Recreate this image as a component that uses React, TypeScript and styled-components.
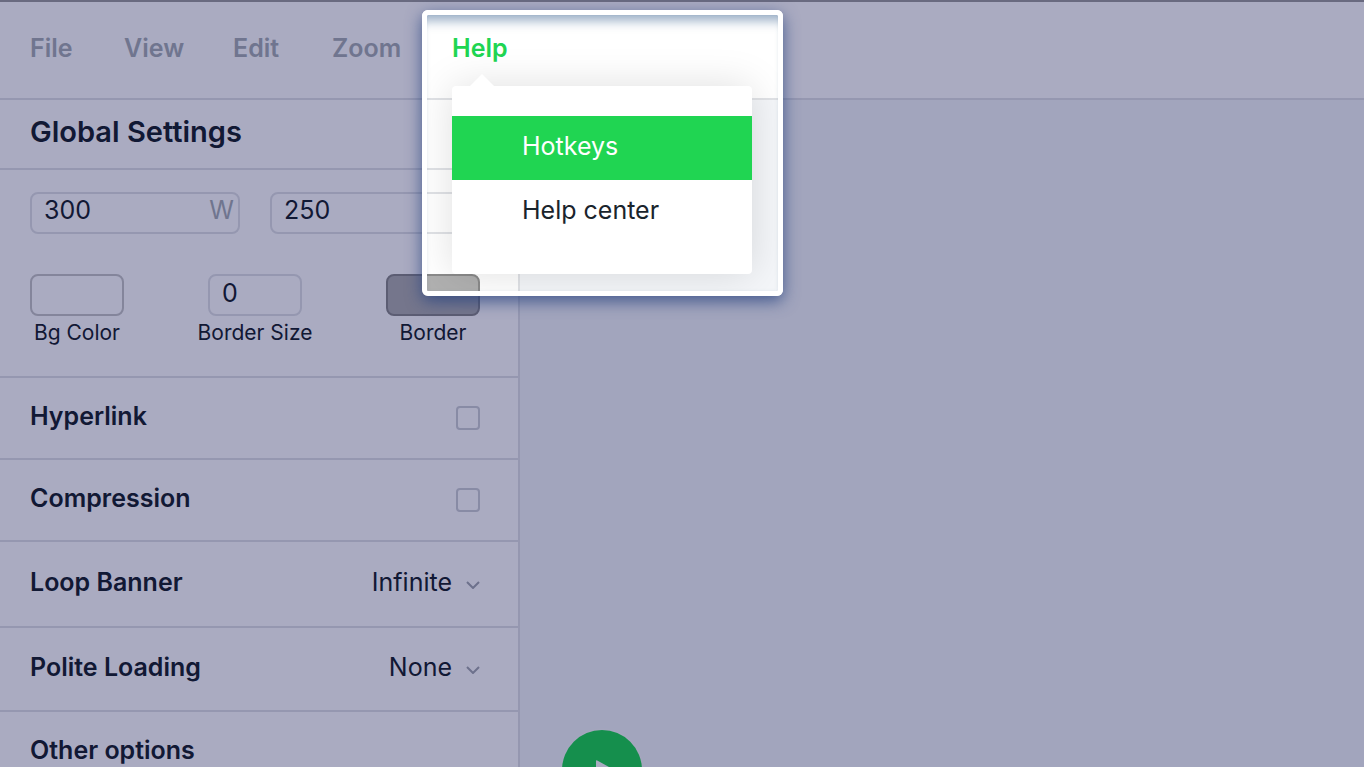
import React from "react";
import styled, { createGlobalStyle, css } from "styled-components";

const ink = "#1a242c";
const muted = "#a8afb4";
const line = "#e0e2e6";
const green = "#20d552";

const GlobalStyle = createGlobalStyle`
  *, *::before, *::after { box-sizing: border-box; }
  body {
    margin: 0;
    overflow: hidden;
    font-family: Inter, "Open Sans", sans-serif;
    font-size: 25px;
    line-height: 32px;
    color: ${ink};
    background: #fff;
  }
  button, input, select { font: inherit; color: inherit; }
`;

const Page = styled.div`
  display: flex;
  flex-direction: column;
  height: 100vh;
  overflow: hidden;
`;

const TopBar = styled.header`
  flex: none;
  height: 100px;
  padding: 30px 30px 0;
  border-top: 2px solid #9e9e9e;
  border-bottom: 2px solid ${line};
  background: #fff;
`;

const Menu = styled.nav`
  display: grid;
  grid-template-columns: 94px 109px 99px 120px auto;
  justify-content: start;
`;

const MenuItem = styled.div`
  position: relative;
`;

const MenuButton = styled.button<{ $active?: boolean }>`
  display: block;
  padding: 0;
  border: 0;
  background: none;
  font-weight: 600;
  color: ${(p) => (p.$active ? green : muted)};
`;

const Dropdown = styled.div`
  position: absolute;
  z-index: 2;
  top: 54px;
  left: 0;
  width: 300px;
  padding: 30px 0;
  border-radius: 4px;
  background: #fff;
  box-shadow: 0 0 40px rgba(0, 0, 0, 0.13);

  &::before {
    content: "";
    position: absolute;
    top: -12px;
    left: 18px;
    border: 12px solid transparent;
    border-top: 0;
    border-bottom-color: #fff;
  }
`;

const DropdownItem = styled.button<{ $selected?: boolean }>`
  display: block;
  width: 100%;
  height: 64px;
  padding: 0 0 4px 70px;
  border: 0;
  text-align: left;
  background: ${(p) => (p.$selected ? green : "#fff")};
  color: ${(p) => (p.$selected ? "#fff" : ink)};
`;

const Spotlight = styled.div`
  position: absolute;
  z-index: 3;
  top: -22px;
  left: -30px;
  width: 361px;
  height: 286px;
  border: 5px solid #fff;
  border-radius: 6px;
  pointer-events: none;
  box-shadow:
    inset 0 15px 11px -9px rgba(60, 100, 145, 0.5),
    inset 0 0 3px rgba(90, 120, 160, 0.12),
    0 5px 16px rgba(36, 66, 128, 0.75),
    0 0 0 4000px rgba(0, 2, 70, 0.333);
`;

const Body = styled.div`
  display: flex;
  flex: 1;
  min-height: 0;
`;

const Sidebar = styled.aside`
  flex: none;
  width: 520px;
  border-right: 2px solid ${line};
  background: #fff;
`;

const Title = styled.h1`
  height: 70px;
  margin: 0;
  padding: 16px 30px 0;
  border-bottom: 2px solid ${line};
  font-size: 29px;
  line-height: 32px;
  font-weight: 600;
`;

const Dimensions = styled.section`
  display: flex;
  flex-direction: column;
  gap: 40px;
  height: 208px;
  padding: 22px 38px 0 30px;
  border-bottom: 2px solid ${line};
`;

const Sizes = styled.div`
  display: grid;
  grid-template-columns: repeat(2, minmax(0, 1fr));
  gap: 30px;
`;

const Swatches = styled.div`
  display: grid;
  grid-template-columns: repeat(3, 94px);
  justify-content: space-between;
`;

const box = css`
  height: 42px;
  border: 2px solid ${line};
  border-radius: 8px;
  background: #fff;
`;

const SizeField = styled.label`
  ${box}
  display: flex;
  padding: 0 4px 6px 12px;
  color: ${muted};
`;

const SizeInput = styled.input`
  flex: 1;
  min-width: 0;
  padding: 0;
  border: 0;
  outline: 0;
  background: none;
  color: ${ink};
`;

const Option = styled.label`
  display: flex;
  flex-direction: column;
  align-items: center;
  gap: 4px;
  font-size: 21px;
  line-height: 26px;
  white-space: nowrap;
`;

const NumberInput = styled.input`
  ${box}
  width: 94px;
  padding: 0 12px 4px;
  font-size: 25px;
`;

const ColorButton = styled.button<{ $fill: string; $edge: string }>`
  ${box}
  width: 94px;
  border-color: ${(p) => p.$edge};
  background: ${(p) => p.$fill};
`;

const Row = styled.div<{ $height: number }>`
  display: flex;
  align-items: center;
  justify-content: space-between;
  height: ${(p) => p.$height}px;
  padding: 0 38px 0 30px;
  border-bottom: 2px solid ${line};
`;

const RowLabel = styled.label`
  padding-bottom: 4px;
  font-weight: 600;
`;

const Check = styled.input`
  appearance: none;
  width: 24px;
  height: 24px;
  margin: 0;
  border: 2px solid #cccfd6;
  border-radius: 4px;
  background: #fff;
`;

const SelectWrap = styled.div`
  display: flex;
  align-items: center;
  gap: 14px;
`;

const Select = styled.select`
  appearance: none;
  width: 160px;
  padding: 0 0 4px;
  border: 0;
  background: none;
  text-align-last: right;
`;

const Workspace = styled.main`
  display: flex;
  flex: 1;
  align-items: flex-end;
  min-width: 0;
  padding-left: 42px;
  background: #f4f6f9;
`;

const Play = styled.button`
  display: flex;
  align-items: center;
  justify-content: center;
  width: 80px;
  height: 80px;
  margin-bottom: -43px;
  padding: 0 0 0 6px;
  border: 0;
  border-radius: 50%;
  background: ${green};
  box-shadow: 0 0 3px #fff;
`;

const Chevron = () => (
  <svg width="14" height="10" viewBox="0 0 14 10" fill="none" aria-hidden="true">
    <path d="M1 3 7 9 13 3" stroke="#a4a8b0" strokeWidth="2" />
  </svg>
);

const menus = ["File", "View", "Edit", "Zoom"];

export default function App() {
  return (
    <Page>
      <GlobalStyle />
      <TopBar>
        <Menu>
          {menus.map((name) => (
            <MenuItem key={name}>
              <MenuButton>{name}</MenuButton>
            </MenuItem>
          ))}
          <MenuItem>
            <MenuButton $active aria-expanded="true">Help</MenuButton>
            <Dropdown>
              <DropdownItem $selected>Hotkeys</DropdownItem>
              <DropdownItem>Help center</DropdownItem>
            </Dropdown>
            <Spotlight />
          </MenuItem>
        </Menu>
      </TopBar>
      <Body>
        <Sidebar>
          <Title>Global Settings</Title>
          <Dimensions>
            <Sizes>
              <SizeField>
                <SizeInput defaultValue="300" />W
              </SizeField>
              <SizeField>
                <SizeInput defaultValue="250" />H
              </SizeField>
            </Sizes>
            <Swatches>
              <Option>
                <ColorButton $fill="#fff" $edge="#c6c6c6" />
                Bg Color
              </Option>
              <Option>
                <NumberInput defaultValue="0" />
                Border Size
              </Option>
              <Option>
                <ColorButton $fill="#b0b0b0" $edge="#8a8a8a" />
                Border
              </Option>
            </Swatches>
          </Dimensions>
          <Row $height={82}>
            <RowLabel htmlFor="hyperlink">Hyperlink</RowLabel>
            <Check id="hyperlink" type="checkbox" />
          </Row>
          <Row $height={82}>
            <RowLabel htmlFor="compression">Compression</RowLabel>
            <Check id="compression" type="checkbox" />
          </Row>
          <Row $height={86}>
            <RowLabel htmlFor="loop">Loop Banner</RowLabel>
            <SelectWrap>
              <Select id="loop">
                <option>Infinite</option>
              </Select>
              <Chevron />
            </SelectWrap>
          </Row>
          <Row $height={84}>
            <RowLabel htmlFor="polite">Polite Loading</RowLabel>
            <SelectWrap>
              <Select id="polite">
                <option>None</option>
              </Select>
              <Chevron />
            </SelectWrap>
          </Row>
          <Row as="section" $height={82}>
            <RowLabel as="span">Other options</RowLabel>
          </Row>
        </Sidebar>
        <Workspace>
          <Play aria-label="Play">
            <svg width="18" height="20" viewBox="0 0 18 20" aria-hidden="true">
              <path d="M0 1.200Q0 0 1.200 .500L17 9.200Q18 10 17 10.800L1.200 19.500Q0 20 0 18.800Z" fill="#fff" />
            </svg>
          </Play>
        </Workspace>
      </Body>
    </Page>
  );
}
